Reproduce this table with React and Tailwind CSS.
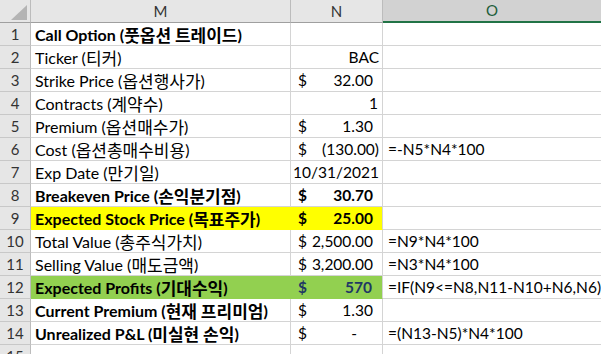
import React from "react";

const KO = "font-['Noto_Sans_CJK_KR',sans-serif] text-[17px] leading-none";

function Label({ en, ko }) {
  return (
    <>
      {en}(<span className={KO}>{ko}</span>)
    </>
  );
}

const rows = [
  { n: 1, en: "Call Option ", ko: "풋옵션 트레이드", bold: true, nv: null },
  { n: 2, en: "Ticker ", ko: "티커", nv: { t: "text", v: "BAC" } },
  { n: 3, en: "Strike Price ", ko: "옵션행사가", nv: { t: "acct", v: "32.00", pr: "pr-[9px]" } },
  { n: 4, en: "Contracts ", ko: "계약수", nv: { t: "text", v: "1", pr: "pr-[4px]" } },
  { n: 5, en: "Premium ", ko: "옵션매수가", nv: { t: "acct", v: "1.30", pr: "pr-[9px]" } },
  { n: 6, en: "Cost ", ko: "옵션총매수비용", nv: { t: "acct", v: "(130.00)", pr: "pr-[3px]" }, o: "=-N5*N4*100" },
  { n: 7, en: "Exp Date ", ko: "만기일", nv: { t: "text", v: "10/31/2021" } },
  { n: 8, en: "Breakeven Price ", ko: "손익분기점", bold: true, nv: { t: "acct", v: "30.70", pr: "pr-[9px]", bold: true } },
  { n: 9, en: "Expected Stock Price ", ko: "목표주가", bold: true, fill: "yellow", nv: { t: "acct", v: "25.00", pr: "pr-[9px]", bold: true } },
  { n: 10, en: "Total Value ", ko: "총주식가치", nv: { t: "acct", v: "2,500.00", pr: "pr-[9px]" }, o: "=N9*N4*100" },
  { n: 11, en: "Selling Value ", ko: "매도금액", nv: { t: "acct", v: "3,200.00", pr: "pr-[9px]" }, o: "=N3*N4*100" },
  { n: 12, en: "Expected Profits ", ko: "기대수익", bold: true, fill: "green", nv: { t: "acct", v: "570", pr: "pr-[10px]", bold: true, navy: true }, o: "=IF(N9<=N8,N11-N10+N6,N6)" },
  { n: 13, en: "Current Premium ", ko: "현재 프리미엄", bold: true, nv: { t: "acct", v: "1.30", pr: "pr-[9px]" } },
  { n: 14, en: "Unrealized P&L ", ko: "미실현 손익", bold: true, nv: { t: "acct", v: "-", pr: "pr-[25px]" }, o: "=(N13-N5)*N4*100" },
  { n: 15, en: "", ko: "", nv: null, empty: true },
];

function fillClasses(fill) {
  if (fill === "yellow") return "bg-[#ffff00] border-b-[#ffff00]";
  if (fill === "green") return "bg-[#92d050] border-b-[#92d050]";
  return "bg-white border-b-[#d4d4d4]";
}

function fillRight(fill) {
  if (fill === "yellow") return "border-r-[#ffff00]";
  if (fill === "green") return "border-r-[#92d050]";
  return "border-r-[#d4d4d4]";
}

function NCell({ r }) {
  const nv = r.nv;
  const base = `h-[23px] border-b border-r border-r-[#d4d4d4] flex items-center pt-[1px] ${fillClasses(r.fill)}`;
  if (!nv) return <div className={base} />;
  const color = nv.navy ? "text-[#1f3864]" : "text-black";
  const weight = nv.bold ? "font-bold" : "font-normal";
  if (nv.t === "text") {
    return (
      <div className={`${base} justify-end ${nv.pr || "pr-[3px]"} ${color} ${weight}`}>
        {nv.v}
      </div>
    );
  }
  return (
    <div className={`${base} justify-between pl-[7px] ${nv.pr} ${color} ${weight}`}>
      <span>$</span>
      <span>{nv.v}</span>
    </div>
  );
}

export default function App() {
  return (
    <div className="w-[601px] h-[354px] overflow-hidden bg-white font-['Lato','Noto_Sans_CJK_KR',sans-serif] text-[15.5px] text-black">
      <div className="grid grid-cols-[31px_260px_92px_218px]">
        {/* header row */}
        <div className="h-[23px] bg-[#e6e6e6] border-b border-b-[#9f9f9f] border-r border-r-[#bcbcbc] flex items-end justify-end pr-[3px] pb-[2px]">
          <svg width="16" height="15" viewBox="0 0 16 15">
            <polygon points="16,0 16,15 0,15" fill="#b4b4b4" />
          </svg>
        </div>
        <div className="h-[23px] bg-[#e6e6e6] border-b border-b-[#9f9f9f] border-r border-r-[#bcbcbc] flex items-center justify-center text-[15px] text-[#333]">
          M
        </div>
        <div className="h-[23px] bg-[#e6e6e6] border-b border-b-[#9f9f9f] border-r border-r-[#bcbcbc] flex items-center justify-center text-[15px] text-[#333]">
          N
        </div>
        <div className="h-[23px] bg-[#d2d2d2] border-b-2 border-b-[#217346] flex items-center justify-center text-[15px] text-[#1d5e3a]">
          O
        </div>

        {rows.map((r) => (
          <React.Fragment key={r.n}>
            <div className="h-[23px] bg-[#e6e6e6] border-b border-b-[#c8c8c8] border-r border-r-[#bcbcbc] flex items-center justify-center pt-[1px] text-[15px] text-[#333]">
              {r.n}
            </div>
            <div
              className={`h-[23px] border-b border-r ${fillRight(r.fill)} ${fillClasses(r.fill)} flex items-center pt-[1px] pl-[4px] text-[16px] whitespace-nowrap overflow-hidden ${r.bold ? "font-bold" : "font-normal"}`}
            >
              {!r.empty && <Label en={r.en} ko={r.ko} />}
            </div>
            <NCell r={r} />
            <div className="h-[23px] border-b border-b-[#d4d4d4] bg-white flex items-center pt-[1px] pl-[5px] whitespace-nowrap">
              {r.o || ""}
            </div>
          </React.Fragment>
        ))}
      </div>
    </div>
  );
}
